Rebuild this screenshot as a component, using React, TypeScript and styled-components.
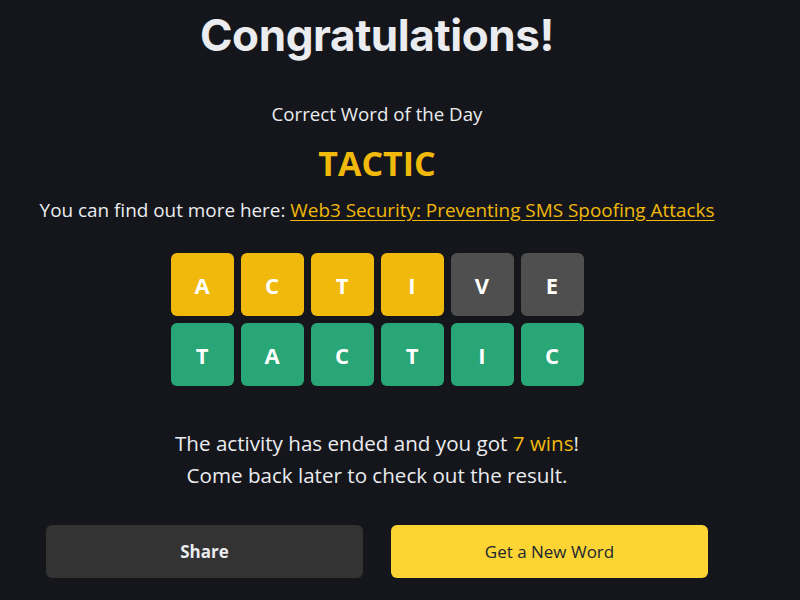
import React from "react";
import styled, { createGlobalStyle } from "styled-components";

const GlobalStyle = createGlobalStyle`
  html, body {
    margin: 0;
    padding: 0;
    background: #15161b;
  }
  body {
    font-family: "Open Sans", Lato, sans-serif;
    color: #eaecef;
  }
`;

const Page = styled.div`
  width: 800px;
  height: 600px;
  overflow: hidden;
  background: #15161b;
`;

const Content = styled.div`
  width: 662px;
  margin-left: 46px;
  display: flex;
  flex-direction: column;
  align-items: center;
  text-align: center;
`;

const Title = styled.h1`
  margin: 7px 0 0;
  font-family: Inter, "Open Sans", sans-serif;
  font-weight: 700;
  font-size: 44px;
  line-height: 56px;
  letter-spacing: -0.4px;
  color: #eaecef;
`;

const Subtitle = styled.div`
  margin-top: 38px;
  font-size: 18.7px;
  line-height: 26px;
  color: #eaecef;
`;

const Answer = styled.div`
  margin-top: 16px;
  font-size: 34px;
  font-weight: 700;
  line-height: 40px;
  color: #f0b90b;
`;

const MoreInfo = styled.div`
  margin-top: 14px;
  white-space: nowrap;
  font-size: 18.9px;
  line-height: 26px;
  color: #eaecef;
`;

const Link = styled.a`
  color: #f0b90b;
  text-decoration: underline;
  text-underline-offset: 3px;
`;

const Board = styled.div`
  margin-top: 30px;
  display: grid;
  grid-template-columns: repeat(6, 63px);
  grid-auto-rows: 63px;
  gap: 7px;
`;

type TileState = "present" | "absent" | "correct";

const tileColors: Record<TileState, string> = {
  present: "#f0b90b",
  absent: "#4f4f4f",
  correct: "#29a676",
};

const Tile = styled.div<{ $state: TileState }>`
  display: flex;
  align-items: center;
  justify-content: center;
  border-radius: 6px;
  background: ${({ $state }) => tileColors[$state]};
  color: #ffffff;
  font-size: 22px;
  font-weight: 700;
`;

const Result = styled.div`
  margin-top: 41px;
  font-size: 20.6px;
  line-height: 32px;
  color: #eaecef;
`;

const Wins = styled.span`
  color: #f0b90b;
`;

const Actions = styled.div`
  margin-top: 34px;
  width: 100%;
  display: grid;
  grid-template-columns: 1fr 1fr;
  gap: 28px;
`;

const Button = styled.button<{ $primary?: boolean }>`
  height: 53px;
  border: none;
  border-radius: 6px;
  font-family: "Open Sans", Lato, sans-serif;
  font-size: 17px;
  font-weight: ${({ $primary }) => ($primary ? 500 : 700)};
  background: ${({ $primary }) => ($primary ? "#fcd535" : "#333333")};
  color: ${({ $primary }) => ($primary ? "#202630" : "#eaecef")};
  cursor: pointer;
`;

const guess: { letter: string; state: TileState }[] = [
  { letter: "A", state: "present" },
  { letter: "C", state: "present" },
  { letter: "T", state: "present" },
  { letter: "I", state: "present" },
  { letter: "V", state: "absent" },
  { letter: "E", state: "absent" },
];

const answer = "TACTIC";

function App() {
  return (
    <Page>
      <GlobalStyle />
      <Content>
        <Title>Congratulations!</Title>
        <Subtitle>Correct Word of the Day</Subtitle>
        <Answer>{answer}</Answer>
        <MoreInfo>
          You can find out more here:{" "}
          <Link href="#">Web3 Security: Preventing SMS Spoofing Attacks</Link>
        </MoreInfo>
        <Board>
          {guess.map((t, i) => (
            <Tile key={"g" + i} $state={t.state}>
              {t.letter}
            </Tile>
          ))}
          {answer.split("").map((l, i) => (
            <Tile key={"a" + i} $state="correct">
              {l}
            </Tile>
          ))}
        </Board>
        <Result>
          The activity has ended and you got <Wins>7 wins</Wins>!
          <br />
          Come back later to check out the result.
        </Result>
        <Actions>
          <Button>Share</Button>
          <Button $primary>Get a New Word</Button>
        </Actions>
      </Content>
    </Page>
  );
}

export default App;
